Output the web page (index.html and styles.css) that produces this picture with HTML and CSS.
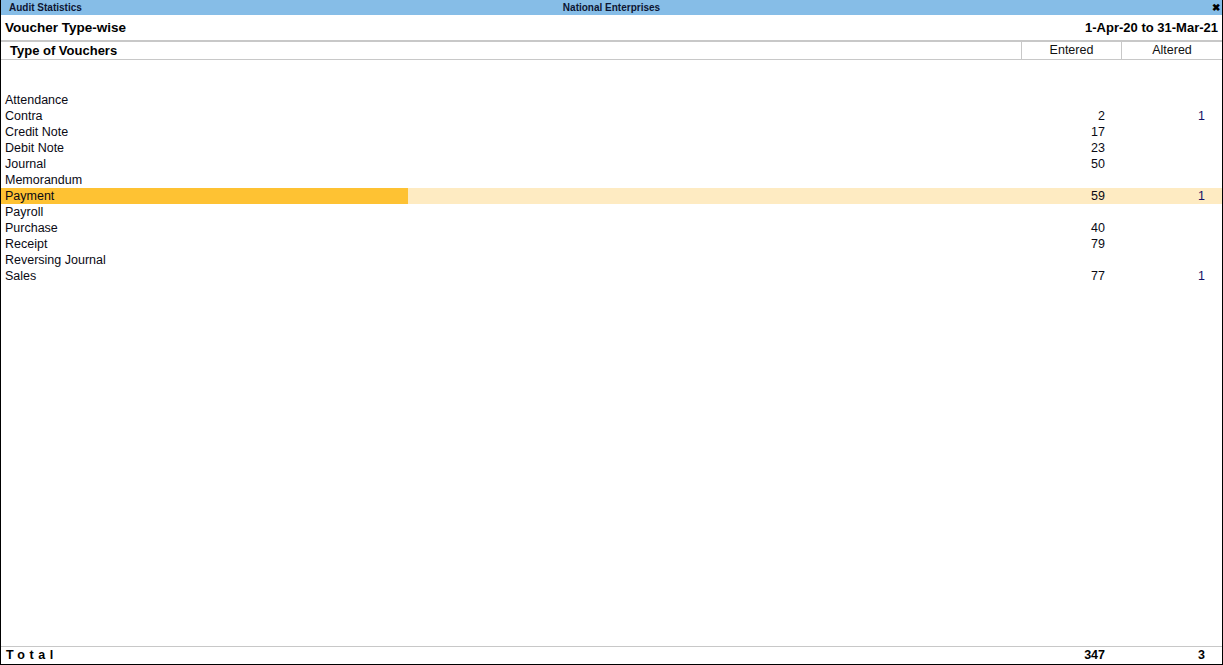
FILE: index.html
```html
<!DOCTYPE html>
<html>
<head>
<meta charset="utf-8">
<link rel="stylesheet" href="styles.css">
</head>
<body>
<div class="window">
  <div class="titlebar">
    <span class="tb-left">Audit Statistics</span>
    <span class="tb-center">National Enterprises</span>
    <span class="tb-right">&#x2716;</span>
  </div>
  <div class="subhead">
    <span class="report-name">Voucher Type-wise</span>
    <span class="period">1-Apr-20 to 31-Mar-21</span>
  </div>
  <div class="grid colhead">
    <div class="c-name">Type of Vouchers</div>
    <div class="c-num">Entered</div>
    <div class="c-num">Altered</div>
  </div>
  <div class="body">
    <div class="grid row"><div class="name">Attendance</div><div class="num"></div><div class="num alt"></div></div>
    <div class="grid row"><div class="name">Contra</div><div class="num">2</div><div class="num alt">1</div></div>
    <div class="grid row"><div class="name">Credit Note</div><div class="num">17</div><div class="num alt"></div></div>
    <div class="grid row"><div class="name">Debit Note</div><div class="num">23</div><div class="num alt"></div></div>
    <div class="grid row"><div class="name">Journal</div><div class="num">50</div><div class="num alt"></div></div>
    <div class="grid row"><div class="name">Memorandum</div><div class="num"></div><div class="num alt"></div></div>
    <div class="grid row selected"><div class="name"><span class="sel-bar">Payment</span></div><div class="num">59</div><div class="num alt">1</div></div>
    <div class="grid row"><div class="name">Payroll</div><div class="num"></div><div class="num alt"></div></div>
    <div class="grid row"><div class="name">Purchase</div><div class="num">40</div><div class="num alt"></div></div>
    <div class="grid row"><div class="name">Receipt</div><div class="num">79</div><div class="num alt"></div></div>
    <div class="grid row"><div class="name">Reversing Journal</div><div class="num"></div><div class="num alt"></div></div>
    <div class="grid row"><div class="name">Sales</div><div class="num">77</div><div class="num alt">1</div></div>
  </div>
  <div class="grid total">
    <div class="name">Total</div>
    <div class="num">347</div>
    <div class="num">3</div>
  </div>
</div>
</body>
</html>
```
FILE: styles.css
```css
html, body {
  margin: 0;
  padding: 0;
  background: #ffffff;
}
body {
  font-family: "Liberation Sans", Arial, sans-serif;
  color: #0a0a14;
}
.window {
  width: 1223px;
  height: 665px;
  box-sizing: border-box;
  border-left: 1px solid #000;
  border-right: 1px solid #000;
  border-bottom: 1px solid #000;
  display: flex;
  flex-direction: column;
}
.titlebar {
  height: 15px;
  background: #86bde7;
  display: grid;
  grid-template-columns: 1fr auto 1fr;
  align-items: center;
  font-size: 10px;
  font-weight: bold;
  color: #0d1633;
  line-height: 15px;
}
.tb-left { padding-left: 8px; }
.tb-center { text-align: center; }
.tb-right {
  text-align: right;
  padding-right: 2px;
  font-size: 10px;
  color: #000;
}
.subhead {
  height: 25px;
  display: flex;
  justify-content: space-between;
  align-items: center;
  padding: 0 4px 0 4px;
  font-size: 13.5px;
  font-weight: bold;
  color: #000;
}
.period {
  font-size: 13px;
}
.grid {
  display: grid;
  grid-template-columns: 1fr 100px 101px;
}
.colhead {
  border-top: 2px solid #c8c8c8;
  border-bottom: 1px solid #c8c8c8;
  height: 17px;
  font-size: 12.5px;
  line-height: 17px;
}
.colhead .c-name {
  font-weight: bold;
  font-size: 13px;
  padding-left: 9px;
  color: #000;
}
.colhead .c-num {
  border-left: 1px solid #c8c8c8;
  text-align: center;
  color: #111;
}
.body {
  flex: 1;
  padding-top: 32px;
}
.row {
  height: 16px;
  line-height: 16px;
  font-size: 12.5px;
}
.row .name {
  padding-left: 4px;
}
.num {
  text-align: right;
  padding-right: 16px;
}
.num.alt {
  padding-right: 17px;
  color: #141066;
}
.row.selected {
  background: #feebc2;
}
.row.selected .name {
  padding-left: 0;
}
.sel-bar {
  display: block;
  width: 403px;
  padding-left: 4px;
  background: #fec233;
}
.total {
  border-top: 1px solid #c8c8c8;
  height: 17px;
  line-height: 17px;
  font-size: 12.5px;
  font-weight: bold;
  color: #000;
}
.total .name {
  padding-left: 5px;
  letter-spacing: 4.6px;
}
.total .num:last-child {
  padding-right: 17px;
}
```
